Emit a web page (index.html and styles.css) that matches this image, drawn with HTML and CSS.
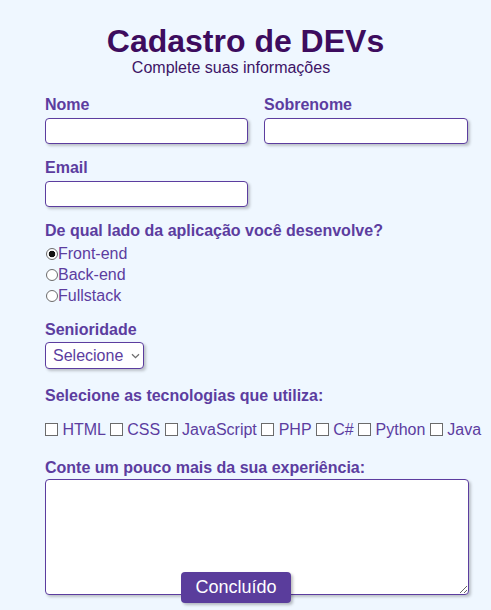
FILE: index.html
```html
<!DOCTYPE html>
<html lang="pt-BR">
<head>
<meta charset="utf-8">
<title>Cadastro de DEVs</title>
<link rel="stylesheet" href="styles.css">
</head>
<body>
<main class="page">
  <header class="head">
    <h1 class="title">Cadastro de DEVs</h1>
    <p class="subtitle">Complete suas informações</p>
  </header>
  <form class="form">
    <div class="row">
      <div class="field">
        <label class="label" for="nome">Nome</label>
        <input class="input" id="nome" type="text">
      </div>
      <div class="field">
        <label class="label" for="sobrenome">Sobrenome</label>
        <input class="input" id="sobrenome" type="text">
      </div>
    </div>
    <div class="field field-email">
      <label class="label" for="email">Email</label>
      <input class="input" id="email" type="email">
    </div>
    <div class="group group-side">
      <p class="label">De qual lado da aplicação você desenvolve?</p>
      <div class="radios">
        <label class="opt"><input class="radio" type="radio" name="lado" checked>Front-end</label>
        <label class="opt"><input class="radio" type="radio" name="lado">Back-end</label>
        <label class="opt"><input class="radio" type="radio" name="lado">Fullstack</label>
      </div>
    </div>
    <div class="group group-sen">
      <label class="label" for="sen">Senioridade</label>
      <span class="select-wrap">
        <select class="select" id="sen">
          <option>Selecione</option>
          <option>Júnior</option>
          <option>Pleno</option>
          <option>Sênior</option>
        </select>
        <svg class="chev" width="9" height="6" viewBox="0 0 9 6" aria-hidden="true"><path d="M1 1.2 L4.5 4.6 L8 1.2" fill="none" stroke="#6e6e6e" stroke-width="1.3"/></svg>
      </span>
    </div>
    <div class="group group-tech">
      <p class="label">Selecione as tecnologias que utiliza:</p>
      <div class="checks"><label class="chk"><input class="box" type="checkbox"> HTML</label> <label class="chk"><input class="box" type="checkbox"> CSS</label> <label class="chk"><input class="box" type="checkbox"> JavaScript</label> <label class="chk"><input class="box" type="checkbox"> PHP</label> <label class="chk"><input class="box" type="checkbox"> C#</label> <label class="chk"><input class="box" type="checkbox"> Python</label> <label class="chk"><input class="box" type="checkbox"> Java</label></div>
    </div>
    <div class="group group-exp">
      <label class="label" for="exp">Conte um pouco mais da sua experiência:</label>
      <textarea class="textarea" id="exp"></textarea>
    </div>
    <button class="btn" type="button">Concluído</button>
  </form>
</main>
</body>
</html>
```
FILE: styles.css
```css
* { box-sizing: border-box; }
html, body { margin: 0; padding: 0; }
body {
  background: #eff7ff;
  font-family: "Liberation Sans", Arial, sans-serif;
  color: #5c3d9f;
  width: 491px;
  height: 610px;
  overflow: hidden;
}
.page { padding-top: 23px; }
.head { text-align: center; }
.title {
  margin: 0;
  font-size: 32px;
  line-height: 36px;
  font-weight: bold;
  color: #3d0c5e;
}
.subtitle {
  margin: 0;
  font-size: 16px;
  line-height: 18px;
  color: #3d1466;
  padding-right: 29px;
}
.form {
  margin: 18px 0 0 45px;
  width: 424px;
  display: flex;
  flex-direction: column;
}
.row {
  display: grid;
  grid-template-columns: 203px 204px;
  column-gap: 16px;
}
.field { display: flex; flex-direction: column; }
.label {
  display: block;
  margin: 0 0 4px 0;
  font-size: 16px;
  line-height: 19px;
  font-weight: bold;
  color: #5c3d9f;
}
.input {
  height: 26px;
  width: 100%;
  border: 1px solid #5c3d9f;
  border-radius: 4px;
  background: #fff;
  box-shadow: 2px 2px 3px rgba(0,0,0,0.22);
  font: 16px "Liberation Sans", Arial, sans-serif;
  padding: 0 6px;
  outline: none;
}
.field-email { margin-top: 14px; width: 203px; }
.group { display: flex; flex-direction: column; align-items: flex-start; }
.group-side { margin-top: 14px; }
.group-side .label { margin-bottom: 3px; }
.radios { display: flex; flex-direction: column; }
.opt {
  font-size: 16px;
  line-height: 21px;
  color: #5c3d9f;
  display: block;
}
.radio {
  -webkit-appearance: none;
  appearance: none;
  width: 12px;
  height: 12px;
  margin: 0 0 0 1px;
  border: 1px solid #6b6b6b;
  border-radius: 50%;
  background: #fff;
  vertical-align: -1px;
}
.radio:checked {
  background: radial-gradient(circle, #111 0 3px, #fff 3.6px);
}
.group-sen { margin-top: 14px; }
.group-sen .label { margin-bottom: 3px; }
.select-wrap {
  position: relative;
  display: inline-block;
}
.select {
  -webkit-appearance: none;
  appearance: none;
  display: block;
  height: 27px;
  width: 99px;
  border: 1px solid #5c3d9f;
  border-radius: 4px;
  background: #fff;
  color: #5c3d9f;
  font: 16px "Liberation Sans", Arial, sans-serif;
  padding: 0 18px 0 7px;
  box-shadow: 2px 2px 3px rgba(0,0,0,0.22);
  outline: none;
}
.chev {
  position: absolute;
  left: 86px;
  top: 11px;
  pointer-events: none;
}
.group-tech { margin-top: 17px; }
.group-tech .label { margin-bottom: 15px; }
.checks {
  font-size: 16px;
  line-height: 19px;
  color: #5c3d9f;
  white-space: nowrap;
}
.chk { display: inline; }
.box {
  -webkit-appearance: none;
  appearance: none;
  width: 13px;
  height: 13px;
  margin: 0;
  border: 1px solid #6b6b6b;
  background: #fff;
  vertical-align: -1px;
  border-radius: 0;
}
.group-exp { margin-top: 19px; }
.group-exp .label { margin-bottom: 2px; }
.textarea {
  width: 424px;
  height: 116px;
  border: 1px solid #5c3d9f;
  border-radius: 4px;
  background: #fff;
  box-shadow: 2px 2px 3px rgba(0,0,0,0.22);
  font: 16px "Liberation Sans", Arial, sans-serif;
  outline: none;
  display: block;
}
.btn {
  align-self: flex-start;
  margin: -23px 0 0 136px;
  width: 110px;
  height: 31px;
  background: #5a3d9c;
  color: #fff;
  border: none;
  border-radius: 4px;
  font: 18px "Liberation Sans", Arial, sans-serif;
  box-shadow: 2px 2px 3px rgba(0,0,0,0.25);
  padding: 0;
  position: relative;
}
```
